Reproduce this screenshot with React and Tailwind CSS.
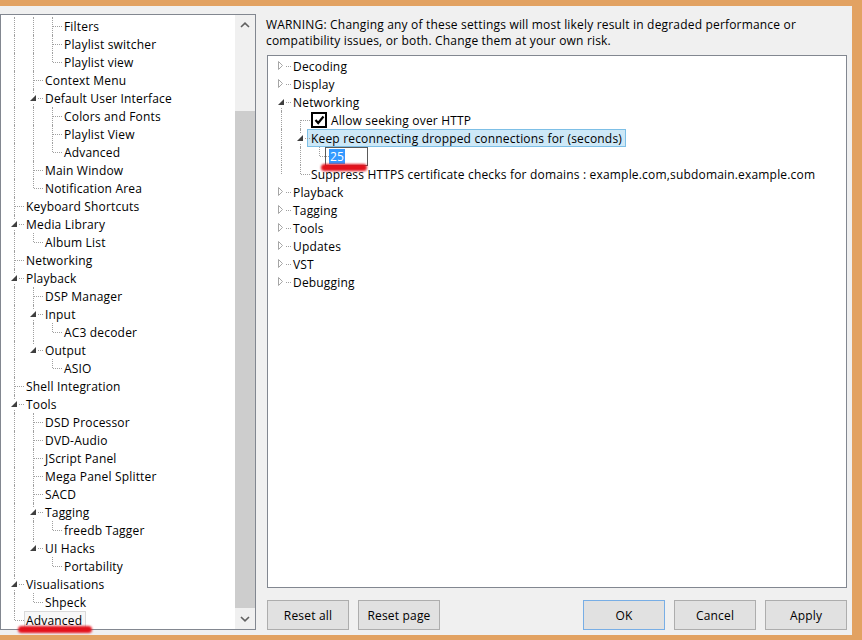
import React from "react";

const DOT = "border-dotted border-[#a0a0a0]";

// Left preferences tree: [label, level, guides, last, open, selected]
const prefTree = [
  ["Filters", 2, [1, 1], 0],
  ["Playlist switcher", 2, [1, 1], 0],
  ["Playlist view", 2, [1, 1], 1],
  ["Context Menu", 1, [1], 0],
  ["Default User Interface", 1, [1], 0, 1],
  ["Colors and Fonts", 2, [1, 1], 0],
  ["Playlist View", 2, [1, 1], 0],
  ["Advanced", 2, [1, 1], 1],
  ["Main Window", 1, [1], 0],
  ["Notification Area", 1, [1], 1],
  ["Keyboard Shortcuts", 0, [], 0],
  ["Media Library", 0, [], 0, 1],
  ["Album List", 1, [1], 1],
  ["Networking", 0, [], 0],
  ["Playback", 0, [], 0, 1],
  ["DSP Manager", 1, [1], 0],
  ["Input", 1, [1], 0, 1],
  ["AC3 decoder", 2, [1, 1], 1],
  ["Output", 1, [1], 1, 1],
  ["ASIO", 2, [1, 0], 1],
  ["Shell Integration", 0, [], 0],
  ["Tools", 0, [], 0, 1],
  ["DSD Processor", 1, [1], 0],
  ["DVD-Audio", 1, [1], 0],
  ["JScript Panel", 1, [1], 0],
  ["Mega Panel Splitter", 1, [1], 0],
  ["SACD", 1, [1], 0],
  ["Tagging", 1, [1], 0, 1],
  ["freedb Tagger", 2, [1, 1], 1],
  ["UI Hacks", 1, [1], 1, 1],
  ["Portability", 2, [1, 0], 1],
  ["Visualisations", 0, [], 0, 1],
  ["Shpeck", 1, [1], 1],
  ["Advanced", 0, [], 1, 0, 1],
];

function OpenGlyph() {
  return (
    <svg className="absolute left-0 top-0" width="19" height="18">
      <rect x="4" y="4" width="10" height="10" fill="white" />
      <polygon points="12,6 12,12 6,12" fill="#3f3f3f" />
    </svg>
  );
}

function ClosedGlyph() {
  return (
    <svg className="absolute left-0 top-0" width="19" height="18">
      <rect x="4" y="3" width="10" height="12" fill="white" />
      <polygon points="6.5,4.5 6.5,12.5 10.5,8.5" fill="none" stroke="#a6a6a6" />
    </svg>
  );
}

function Cell({ children }) {
  return <div className="relative w-[19px] shrink-0">{children}</div>;
}

function VLine({ part = "full" }) {
  const h = part === "full" ? "top-0 h-full" : part === "top" ? "top-0 h-[9px]" : "top-[9px] h-[9px]";
  return <span className={`absolute left-[9px] border-l ${DOT} ${h}`} />;
}

function HLine({ from = 10 }) {
  return (
    <span
      className={`absolute top-[9px] right-0 border-t ${DOT}`}
      style={{ left: from }}
    />
  );
}

function PrefRow({ row }) {
  const [label, level, guides, last, open, selected] = row;
  return (
    <div className="flex h-[18px] items-stretch">
      {guides.map((g, i) => (
        <Cell key={i}>{g ? <VLine /> : null}</Cell>
      ))}
      <Cell>
        <VLine part={last ? "top" : "full"} />
        <HLine />
        {open ? <OpenGlyph /> : null}
      </Cell>
      <span
        className={`whitespace-nowrap border pl-[1px] pr-[3px] pt-[1px] leading-[15px] ${
          selected ? "border-[#d9d9d9] bg-[#f7f7f7]" : "border-transparent"
        }`}
      >
        {label}
      </span>
    </div>
  );
}

function Chevron({ up }) {
  return (
    <svg width="10" height="6" viewBox="0 0 10 6">
      <polyline
        points={up ? "1,5 5,1.2 9,5" : "1,1 5,4.8 9,1"}
        fill="none"
        stroke="#606060"
        strokeWidth="1.6"
      />
    </svg>
  );
}

function PrefPanel() {
  return (
    <div className="flex h-[616px] w-[256px] shrink-0 border border-[#828790] bg-white">
      <div className="flex-1 overflow-hidden pl-[4px] pt-[2px]">
        {prefTree.map((r, i) => (
          <PrefRow key={i} row={r} />
        ))}
      </div>
      <div className="flex w-[20px] flex-col bg-[#f0f0f0]">
        <div className="flex h-[22px] items-center justify-center pb-[3px]">
          <Chevron up />
        </div>
        <div className="h-[74px]" />
        <div className="flex-1 bg-[#cdcdcd]" />
        <div className="flex h-[21px] items-center justify-center">
          <Chevron />
        </div>
      </div>
    </div>
  );
}

function Label({ children, className = "" }) {
  return <span className={`whitespace-nowrap pt-[1px] leading-[17px] ${className}`}>{children}</span>;
}

function RootItem({ label }) {
  return (
    <div className="flex h-[18px] items-stretch">
      <Cell>
        <HLine from={13} />
        <ClosedGlyph />
      </Cell>
      <Label className="pl-[2px]">{label}</Label>
    </div>
  );
}

function AdvancedTree() {
  return (
    <div className="h-[533px] border border-[#828790] bg-white pl-[4px] pt-[1px]">
      <RootItem label="Decoding" />
      <RootItem label="Display" />

      {/* Networking, expanded */}
      <div className="flex h-[18px] items-stretch">
        <Cell>
          <VLine part="bottom" />
          <HLine from={13} />
          <OpenGlyph />
        </Cell>
        <Label className="pl-[2px]">Networking</Label>
      </div>

      <div className="flex h-[18px] items-stretch">
        <Cell>
          <VLine />
        </Cell>
        <Cell>
          <VLine part="bottom" />
          <HLine />
        </Cell>
        <span className="ml-[1px] mt-[1px] flex h-[16px] w-[16px] items-center justify-center border-2 border-black bg-white">
          <svg width="11" height="10" viewBox="0 0 11 10">
            <polyline points="1.5,5 4.2,8 9.5,1.5" fill="none" stroke="#000" strokeWidth="2.2" />
          </svg>
        </span>
        <Label className="pl-[4px]">Allow seeking over HTTP</Label>
      </div>

      <div className="flex h-[18px] items-stretch">
        <Cell>
          <VLine />
        </Cell>
        <Cell>
          <VLine />
          <HLine />
          <OpenGlyph />
        </Cell>
        <span className="-ml-[3px] whitespace-nowrap border border-[#7dbfe6] bg-[#cde8f7] px-[3px] pt-[1px] leading-[15px]">
          Keep reconnecting dropped connections for (seconds)
        </span>
      </div>

      <div className="flex h-[18px] items-stretch">
        <Cell>
          <VLine />
        </Cell>
        <Cell>
          <VLine />
        </Cell>
        <Cell>
          <VLine part="top" />
          <HLine />
        </Cell>
        <span className="-ml-[4px] h-[19px] w-[43px] border border-[#5a5a5a] bg-white pl-[3px] pt-[1px]">
          <span className="block h-[15px] w-[16px] bg-[#3399ff] pt-[1px] text-center leading-[14px] text-white">25</span>
        </span>
      </div>

      <div className="flex h-[18px] items-stretch">
        <Cell>
          <VLine part="top" />
        </Cell>
        <Cell>
          <VLine part="top" />
          <HLine />
        </Cell>
        <Label className="pl-[1px]">
          Suppress HTTPS certificate checks for domains : example.com,subdomain.example.com
        </Label>
      </div>

      {["Playback", "Tagging", "Tools", "Updates", "VST", "Debugging"].map((l) => (
        <RootItem key={l} label={l} />
      ))}
    </div>
  );
}

function Btn({ children, primary }) {
  return (
    <button
      className={`h-[30px] w-[82px] border bg-[#e1e1e1] pt-[1px] text-[12px] text-black ${
        primary ? "border-[#78aee5]" : "border-[#adadad]"
      }`}
    >
      {children}
    </button>
  );
}

export default function App() {
  return (
    <div className="relative h-[640px] w-[862px] overflow-hidden bg-[#e2a262] pt-[6px] font-['Open_Sans',sans-serif] text-[12px] tracking-[0.18px] text-black">
      <div className="flex h-[629px] w-[852px] gap-[10px] bg-[#f0f0f0] pt-[8px]">
        <PrefPanel />
        <div className="flex flex-1 flex-col pr-[5px] pt-[2px]">
          <p className="pt-[1px] leading-[16px]">
            WARNING: Changing any of these settings will most likely result in degraded performance or
            <br />
            compatibility issues, or both. Change them at your own risk.
          </p>
          <div className="ml-[1px] mt-[6px]">
            <AdvancedTree />
          </div>
          <div className="ml-[1px] mt-[12px] flex gap-[9px]">
            <Btn>Reset all</Btn>
            <Btn>Reset page</Btn>
            <div className="flex-1" />
            <Btn primary>OK</Btn>
            <Btn>Cancel</Btn>
            <Btn>Apply</Btn>
          </div>
        </div>
      </div>

      {/* red marker strokes */}
      <div className="absolute left-[18px] top-[626px] h-[7px] w-[74px] rounded-full bg-[#e3121c] blur-[0.8px]" />
      <div className="absolute left-[321px] top-[164px] h-[7px] w-[46px] rounded-full bg-[#e3121c] blur-[0.8px]" />
    </div>
  );
}
